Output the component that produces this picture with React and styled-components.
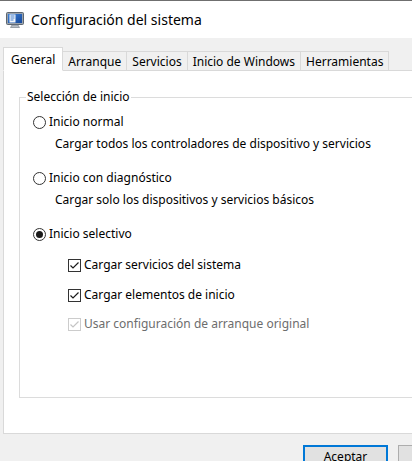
import React from "react";
import styled, { createGlobalStyle } from "styled-components";

const GlobalStyle = createGlobalStyle`
  html, body {
    margin: 0;
    padding: 0;
    background: #f0f0f0;
  }
  body {
    font-family: "Noto Sans", "Open Sans", sans-serif;
    font-size: 12px;
    color: #000;
  }
`;

const Window = styled.div`
  width: 412px;
  height: 461px;
  overflow: hidden;
  background: #f0f0f0;
  border-top: 1px solid #6f6f6f;
  box-sizing: border-box;
`;

const TitleBar = styled.div`
  height: 37px;
  background: #fff;
  display: flex;
  align-items: center;
  padding-left: 6px;
  gap: 7px;
`;

const TitleText = styled.span`
  font-size: 14px;
  color: #000;
`;

const Body = styled.div`
  padding: 8px 0 0 3px;
`;

const TabStrip = styled.div`
  display: flex;
  align-items: flex-end;
  height: 24px;
  position: relative;
  z-index: 1;
`;

const Tab = styled.div`
  height: ${(p) => (p.$active ? 24 : 20)}px;
  padding: 0 ${(p) => (p.$active ? 7 : 5)}px;
  display: flex;
  align-items: center;
  box-sizing: border-box;
  background: ${(p) => (p.$active ? "#fff" : "#f0f0f0")};
  border: 1px solid #d9d9d9;
  border-bottom: ${(p) => (p.$active ? "1px solid #fff" : "1px solid #d9d9d9")};
  margin-bottom: -1px;
  & + & {
    border-left: none;
  }
  white-space: nowrap;
`;

const Panel = styled.div`
  background: #fff;
  border: 1px solid #d9d9d9;
  border-right: none;
  height: 364px;
  box-sizing: border-box;
  padding: 18px 0 0 15px;
`;

const GroupBox = styled.fieldset`
  margin: 0;
  border: 1px solid #dcdcdc;
  border-right: none;
  height: 309px;
  box-sizing: border-box;
  padding: 9px 0 0 13px;
  display: flex;
  flex-direction: column;
`;

const Legend = styled.legend`
  padding: 0 1px;
  margin-left: -7px;
  line-height: 16px;
`;

const OptionRow = styled.label`
  display: flex;
  align-items: center;
  gap: 3px;
  height: 16px;
  line-height: 16px;
  margin-top: ${(p) => p.$top || 0}px;
  margin-left: ${(p) => p.$indent || 0}px;
  color: ${(p) => (p.$disabled ? "#6d6d6d" : "#000")};
  white-space: nowrap;
`;

const Description = styled.div`
  height: 16px;
  line-height: 16px;
  margin-top: 6px;
  margin-left: 22px;
  white-space: nowrap;
`;

const RadioCircle = styled.span`
  width: 13px;
  height: 13px;
  border: 1px solid #333;
  border-radius: 50%;
  box-sizing: border-box;
  background: #fff;
  display: flex;
  align-items: center;
  justify-content: center;
  flex: none;
  &::after {
    content: "";
    display: ${(p) => (p.$checked ? "block" : "none")};
    width: 7px;
    height: 7px;
    border-radius: 50%;
    background: #1a1a1a;
  }
`;

const CheckBox = styled.span`
  width: 13px;
  height: 13px;
  border: 1px solid ${(p) => (p.$disabled ? "#cccccc" : "#333")};
  box-sizing: border-box;
  background: #fff;
  display: flex;
  align-items: center;
  justify-content: center;
  flex: none;
`;

const Footer = styled.div`
  display: flex;
  gap: 10px;
  padding: 11px 0 0 300px;
`;

const Button = styled.div`
  width: 85px;
  height: 23px;
  box-sizing: border-box;
  flex: none;
  background: #e1e1e1;
  border: ${(p) => (p.$default ? "2px solid #0078d7" : "1px solid #adadad")};
  display: flex;
  align-items: center;
  justify-content: center;
`;

function SysIcon() {
  return (
    <svg width="18" height="18" viewBox="0 0 18 18">
      <defs>
        <linearGradient id="scr" x1="0" y1="0" x2="1" y2="1">
          <stop offset="0" stopColor="#3b7fd6" />
          <stop offset="1" stopColor="#16489a" />
        </linearGradient>
      </defs>
      <rect x="0.5" y="1.5" width="17" height="12" rx="1" fill="#9aa3ad" stroke="#5d6670" />
      <rect x="2" y="3" width="14" height="9" fill="url(#scr)" />
      <rect x="3.5" y="3.5" width="6" height="8" fill="#f4f7fb" />
      <path d="M4.5 5h4M4.5 7h4M4.5 9h3" stroke="#2f6fc8" strokeWidth="0.9" />
      <path d="M6 14h6l1.5 2.5h-9z" fill="#b8bec6" stroke="#6c747d" strokeWidth="0.6" />
    </svg>
  );
}

function CheckMark({ color }) {
  return (
    <svg width="11" height="11" viewBox="0 0 11 11">
      <path d="M1.5 5.5 L4 8 L9.5 2.5" fill="none" stroke={color} strokeWidth="1.2" />
    </svg>
  );
}

function Radio({ checked, label, top }) {
  return (
    <OptionRow $top={top}>
      <RadioCircle $checked={checked} />
      {label}
    </OptionRow>
  );
}

function Check({ label, top, disabled }) {
  return (
    <OptionRow $top={top} $indent={35} $disabled={disabled}>
      <CheckBox $disabled={disabled}>
        <CheckMark color={disabled ? "#c4c4c4" : "#1a1a1a"} />
      </CheckBox>
      {label}
    </OptionRow>
  );
}

const tabs = ["General", "Arranque", "Servicios", "Inicio de Windows", "Herramientas"];

export default function App() {
  return (
    <>
      <GlobalStyle />
      <Window>
        <TitleBar>
          <SysIcon />
          <TitleText>Configuración del sistema</TitleText>
        </TitleBar>
        <Body>
          <TabStrip>
            {tabs.map((t, i) => (
              <Tab key={t} $active={i === 0}>
                {t}
              </Tab>
            ))}
          </TabStrip>
          <Panel>
            <GroupBox>
              <Legend>Selección de inicio</Legend>
              <Radio label="Inicio normal" />
              <Description>Cargar todos los controladores de dispositivo y servicios</Description>
              <Radio label="Inicio con diagnóstico" top={18} />
              <Description>Cargar solo los dispositivos y servicios básicos</Description>
              <Radio label="Inicio selectivo" top={18} checked />
              <Check label="Cargar servicios del sistema" top={15} />
              <Check label="Cargar elementos de inicio" top={14} />
              <Check label="Usar configuración de arranque original" top={13} disabled />
            </GroupBox>
          </Panel>
          <Footer>
            <Button $default>Aceptar</Button>
            <Button>Cancelar</Button>
          </Footer>
        </Body>
      </Window>
    </>
  );
}
